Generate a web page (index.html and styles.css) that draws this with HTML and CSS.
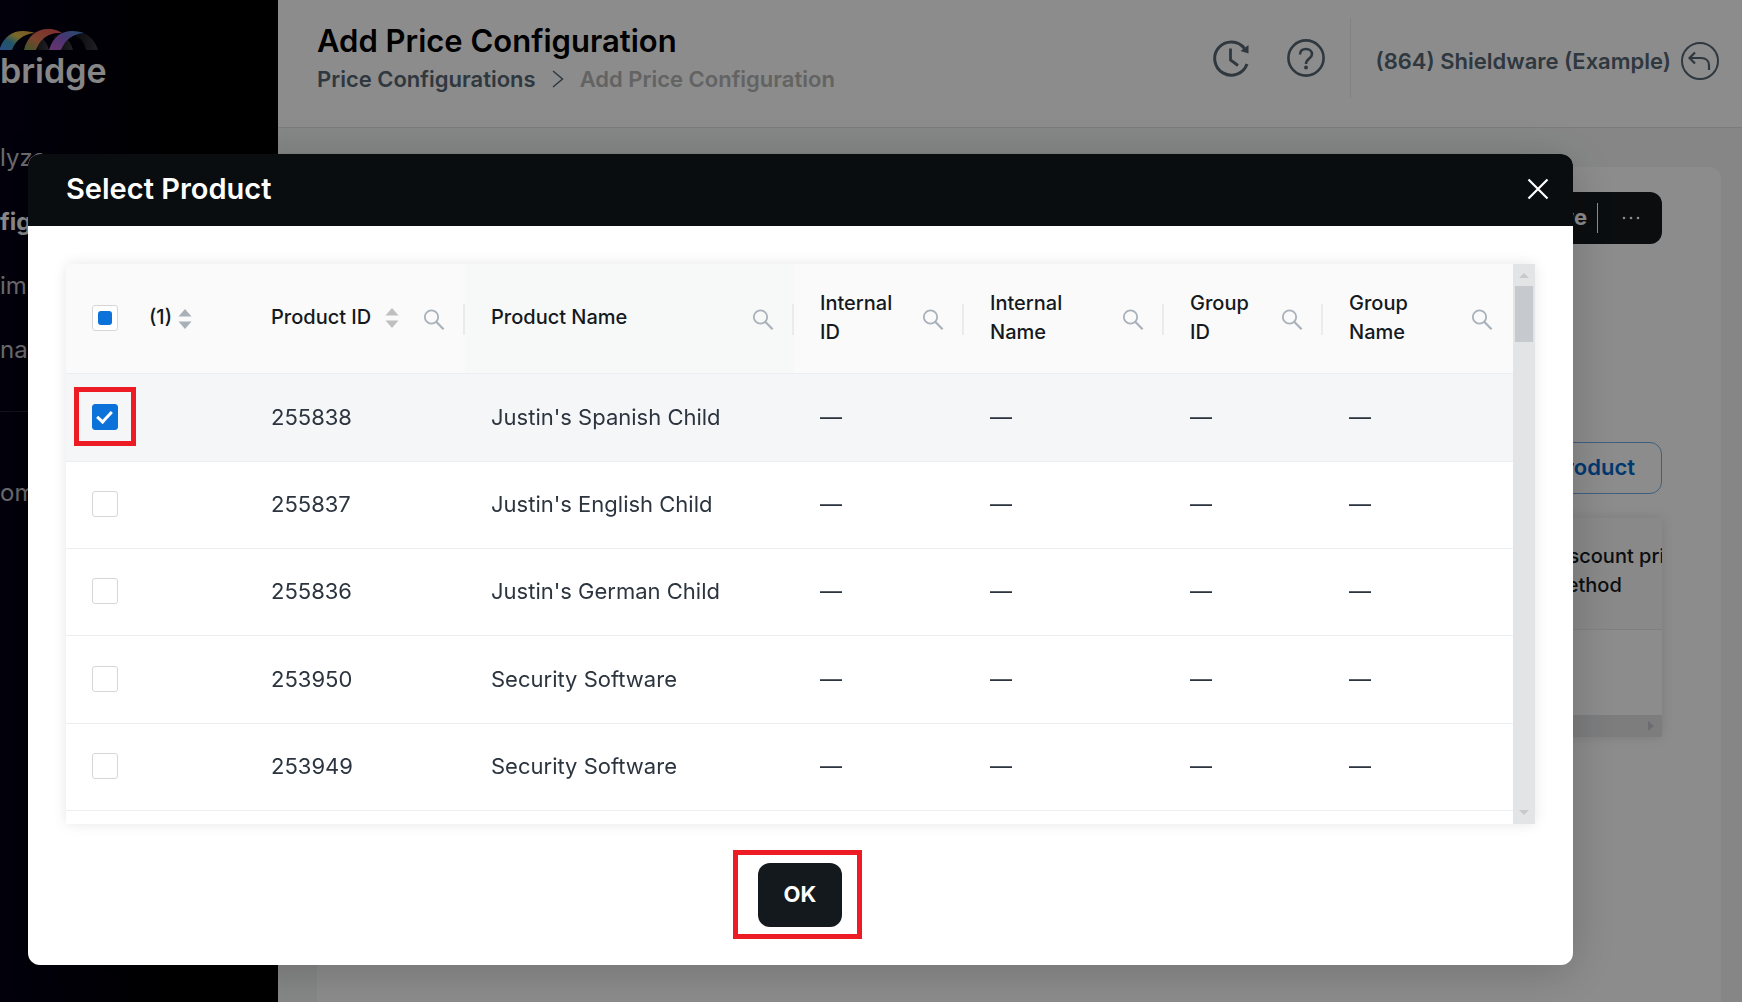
FILE: index.html
```html
<!DOCTYPE html>
<html lang="en">
<head>
<meta charset="utf-8">
<title>Add Price Configuration</title>
<link rel="stylesheet" href="styles.css">
</head>
<body>
<svg class="sprite" aria-hidden="true">
  <symbol id="search" viewBox="0 0 22 22"><circle cx="8.500" cy="8" r="6.700" fill="none" stroke="currentColor" stroke-width="1.800"/><path d="M13.200 12.800l7.400 7.400" fill="none" stroke="currentColor" stroke-width="2.200"/></symbol>
  <symbol id="sorter" viewBox="0 0 14 22"><path d="M7 1l6.500 7.500H.5zM7 21L.5 13.500h13z" fill="currentColor"/></symbol>
</svg>

<div class="app">
  <aside class="sidebar">
    <a class="brand" href="#" aria-label="bridge">
      <svg class="brand-mark" viewBox="0 0 100 22" aria-hidden="true">
        <defs>
          <linearGradient id="g1" x1="0" x2="1" y1="1" y2="0"><stop offset="0" stop-color="#4a8ff0"/><stop offset=".35" stop-color="#3f9ab8"/><stop offset=".6" stop-color="#d8c04a"/><stop offset="1" stop-color="#e89a40"/></linearGradient>
          <linearGradient id="g2" x1="0" x2="1" y1="1" y2="0"><stop offset="0" stop-color="#6fa050"/><stop offset=".4" stop-color="#e07a50"/><stop offset="1" stop-color="#e85058"/></linearGradient>
          <linearGradient id="g3" x1="0" x2="1" y1="1" y2="0"><stop offset="0" stop-color="#c060c8"/><stop offset=".5" stop-color="#8a60d0"/><stop offset="1" stop-color="#3a90d0"/></linearGradient>
          <linearGradient id="g4" x1="0" x2="1"><stop offset="0" stop-color="#0c0c12"/><stop offset="1" stop-color="#3c3c44"/></linearGradient>
        </defs>
        <path d="M34 5c8 2 13 8 15 16H38C36 14 33 10 28 8z" fill="url(#g4)"/>
        <path d="M58 5c8 2 13 8 15 16H62C60 14 57 10 52 8z" fill="url(#g4)"/>
        <path d="M72 2c14 0 23 8 26 19H86C84 12 79 7 70 4z" fill="url(#g4)"/>
        <path d="M0 19C4 8 12 2 23 2c5 0 9 1 12 2-12 1-19 7-23 17H0z" fill="url(#g1)"/>
        <path d="M24 21C27 8 36 0 48 0c7 0 11 2 14 4-14-1-22 6-26 17z" fill="url(#g2)"/>
        <path d="M49 21C53 8 61 2 72 2c5 0 9 1 12 2-12 1-19 7-23 17z" fill="url(#g3)"/>
      </svg>
      <span class="brand-name">bridge</span>
    </a>
    <nav class="nav">
      <a href="#">lyze</a>
      <a href="#" class="active">fig</a>
      <a href="#">im</a>
      <a href="#">nag</a>
      <hr>
      <a href="#">om</a>
    </nav>
  </aside>

  <div class="page">
    <header class="topbar">
      <div class="heading">
        <h1>Add Price Configuration</h1>
        <nav class="crumbs">
          <a href="#">Price Configurations</a>
          <svg width="12" height="18" viewBox="0 0 12 18" aria-hidden="true"><path d="M1 1l9.500 8L1 17" fill="none" stroke="currentColor" stroke-width="1.500"/></svg>
          <span>Add Price Configuration</span>
        </nav>
      </div>
      <div class="tools">
        <button class="icon-btn" aria-label="History">
          <svg viewBox="0 0 38 38"><path d="M32.500 9.500A16.600 16.600 0 1 0 35 25" fill="none" stroke="currentColor" stroke-width="3"/><path d="M36.500 6v8.500l-8-2.500z" fill="currentColor"/><path d="M18.500 9.500V21l7.500 5.500" fill="none" stroke="currentColor" stroke-width="2.800"/></svg>
        </button>
        <button class="icon-btn" aria-label="Help">
          <svg viewBox="0 0 38 38"><circle cx="19" cy="19" r="17.600" fill="none" stroke="currentColor" stroke-width="2.600"/><path d="M13 15.500C13 11.500 15.500 10 19 10s6 2 6 5.200c0 4.300-6 4.500-6 9.800" fill="none" stroke="currentColor" stroke-width="2.600"/><circle cx="19" cy="28.500" r="1.900" fill="currentColor"/></svg>
        </button>
        <div class="client">
          <span>(864) Shieldware (Example)</span>
          <button class="icon-btn" aria-label="Back">
            <svg viewBox="0 0 38 38"><circle cx="19" cy="19" r="18" fill="none" stroke="currentColor" stroke-width="2"/><path d="M14 10.500L8.500 16l5.500 5.500M8.500 16H20c5 0 8 3 8 7.500V28" fill="none" stroke="currentColor" stroke-width="2.200"/></svg>
          </button>
        </div>
      </div>
    </header>
    <main class="content">
      <section class="card">
        <div class="split-btn">
          <button class="save">Save</button>
          <button class="more" aria-label="More">
            <svg width="18" height="4" viewBox="0 0 18 4"><g fill="currentColor"><circle cx="2" cy="2" r="1.300"/><circle cx="9" cy="2" r="1.300"/><circle cx="16" cy="2" r="1.300"/></g></svg>
          </button>
        </div>
        <button class="add-product">Select Product</button>
        <div class="under-table">
          <div class="under-head"><span>Discount pricing<br>method</span></div>
          <div class="under-row"></div>
          <div class="h-scroll"><svg width="6" height="10" viewBox="0 0 6 10" aria-hidden="true"><path d="M0 0l6 5-6 5z" fill="currentColor"/></svg></div>
        </div>
      </section>
    </main>
  </div>
</div>

<div class="overlay">
  <div class="modal" role="dialog" aria-modal="true" aria-labelledby="modal-title">
    <header class="modal-head">
      <h2 id="modal-title">Select Product</h2>
      <button class="close" aria-label="Close"><svg width="22" height="22" viewBox="0 0 22 22"><path d="M1.500 1.500l19 19M20.500 1.500l-19 19" stroke="currentColor" stroke-width="2.200"/></svg></button>
    </header>
    <div class="modal-body">
      <div class="table-box">
        <div class="table-view">
          <table>
            <colgroup><col class="c-check"><col class="c-count"><col class="c-id"><col class="c-name"><col class="c-iid"><col class="c-iname"><col class="c-gid"><col class="c-gname"></colgroup>
            <thead>
              <tr>
                <th><input type="checkbox" class="partial" aria-label="Select all"></th>
                <th><div class="th count"><span>(1)</span><svg class="sorter cool"><use href="#sorter"/></svg></div></th>
                <th class="split"><div class="th"><span>Product ID</span><svg class="sorter"><use href="#sorter"/></svg><svg class="search"><use href="#search"/></svg></div></th>
                <th class="split hover"><div class="th"><span>Product Name</span><svg class="search"><use href="#search"/></svg></div></th>
                <th class="split"><div class="th"><span>Internal<br>ID</span><svg class="search"><use href="#search"/></svg></div></th>
                <th class="split"><div class="th"><span>Internal<br>Name</span><svg class="search"><use href="#search"/></svg></div></th>
                <th class="split"><div class="th"><span>Group<br>ID</span><svg class="search"><use href="#search"/></svg></div></th>
                <th><div class="th"><span>Group<br>Name</span><svg class="search"><use href="#search"/></svg></div></th>
              </tr>
            </thead>
            <tbody>
              <tr class="selected"><td><span class="marked"><input type="checkbox" checked aria-label="Select 255838"></span></td><td></td><td>255838</td><td>Justin's Spanish Child</td><td>—</td><td>—</td><td>—</td><td>—</td></tr>
              <tr><td><input type="checkbox" aria-label="Select 255837"></td><td></td><td>255837</td><td>Justin's English Child</td><td>—</td><td>—</td><td>—</td><td>—</td></tr>
              <tr><td><input type="checkbox" aria-label="Select 255836"></td><td></td><td>255836</td><td>Justin's German Child</td><td>—</td><td>—</td><td>—</td><td>—</td></tr>
              <tr><td><input type="checkbox" aria-label="Select 253950"></td><td></td><td>253950</td><td>Security Software</td><td>—</td><td>—</td><td>—</td><td>—</td></tr>
              <tr><td><input type="checkbox" aria-label="Select 253949"></td><td></td><td>253949</td><td>Security Software</td><td>—</td><td>—</td><td>—</td><td>—</td></tr>
            </tbody>
          </table>
        </div>
        <div class="v-scroll" aria-hidden="true">
          <svg width="10" height="5" viewBox="0 0 10 5"><path d="M5 0l5 5H0z" fill="currentColor"/></svg>
          <div class="thumb"></div>
          <svg width="10" height="5" viewBox="0 0 10 5"><path d="M0 0h10L5 5z" fill="currentColor"/></svg>
        </div>
      </div>
      <div class="actions"><span class="ok-mark"><button class="ok">OK</button></span></div>
    </div>
  </div>
</div>
</body>
</html>
```
FILE: styles.css
```css
*, *::before, *::after { box-sizing: border-box; }
body { margin: 0; font-family: Inter, "Liberation Sans", sans-serif; font-size: 22px; color: #2c353f; background: #f4f5f5; }
button { font: inherit; color: inherit; background: none; border: 0; padding: 0; cursor: pointer; }
a { color: inherit; text-decoration: none; }
h1, h2 { margin: 0; font-weight: 600; }
.sprite { position: absolute; width: 0; height: 0; }

/* Application shell */
.app { display: grid; grid-template-columns: 278px 1fr; height: 100vh; overflow: hidden; }
.sidebar { padding-top: 29px; background: linear-gradient(90deg, #030016, #000 70%); color: #c4c4c8; overflow: hidden; }
.brand { display: block; height: 104px; color: #f4f4f4; }
.brand-mark { display: block; width: 100px; height: 22px; }
.brand-name { display: block; font-size: 34px; font-weight: 600; line-height: 40px; }
.nav { display: flex; flex-direction: column; font-size: 24px; }
.nav a { height: 64px; line-height: 50px; }
.nav .active { font-weight: 700; color: #fff; }
.nav hr { width: 100%; margin: 22px 0 56px; border: 0; border-top: 1px solid #24222e; }

.page { display: flex; flex-direction: column; min-width: 0; }
.topbar { display: flex; justify-content: space-between; height: 128px; padding: 0 23px 0 39px; background: #fff; border-bottom: 1px solid #dfe1e4; }
.heading { padding-top: 22px; }
.heading h1 { font-size: 31px; line-height: 38px; color: #000; }
.crumbs { display: flex; align-items: center; gap: 16px; line-height: 38px; font-weight: 600; color: #576674; }
.crumbs span { color: #b4b4b4; }
.tools { display: flex; align-items: center; height: 116px; gap: 37px; color: #576674; }
.icon-btn { display: block; width: 38px; height: 38px; }
.icon-btn svg { display: block; width: 38px; height: 38px; }
.client { display: flex; align-items: center; gap: 10px; height: 80px; margin-left: -12px; padding: 5px 0 0 24px; border-left: 1px solid #e9ebed; font-weight: 600; }
.content { flex: 1; display: flex; padding: 39px 21px 0 39px; }
.card { flex: 1; display: flex; flex-direction: column; align-items: flex-end; min-width: 0; padding: 25px 59px; border-radius: 12px 12px 0 0; background: #fff; }
.split-btn { display: flex; align-items: center; height: 52px; border-radius: 12px; background: #14191d; color: #fff; font-weight: 700; }
.save { height: 52px; padding: 0 10px 2px 26px; }
.more { display: flex; align-items: center; height: 30px; padding: 0 22px 0 24px; border-left: 1px solid #fff; }
.add-product { height: 52px; margin-top: 198px; padding: 0 26px 2px; border: 1px solid #72aee8; border-radius: 12px; color: #0066cc; font-weight: 600; }
.under-table { width: 100%; margin-top: 24px; box-shadow: 0 0 12px rgba(0, 0, 0, .12); }
.under-head { display: flex; justify-content: flex-end; height: 112px; padding-top: 24px; overflow: hidden; border-bottom: 1px solid #e8eaec; background: #fafafa; color: #14191d; font-size: 20px; font-weight: 500; line-height: 29px; }
.under-head span { width: 113px; white-space: nowrap; }
.under-row { height: 85px; }
.h-scroll { display: flex; align-items: center; justify-content: flex-end; height: 22px; padding-right: 8px; background: #e3e4e6; color: #c4c7cc; }

/* Dialog */
.overlay { position: fixed; inset: 0; padding: 154px 169px 37px 28px; background: rgba(0, 0, 0, .45); }
.modal { border-radius: 12px; background: #fff; box-shadow: 0 6px 48px rgba(0, 0, 0, .2); }
.modal-head { display: flex; align-items: center; justify-content: space-between; height: 72px; padding: 0 24px 3px 38px; border-radius: 12px 12px 0 0; background: #090d0f; color: #fff; }
.modal-head h2 { font-size: 29px; line-height: 36px; }
.close, .close svg { display: block; }
.modal-body { padding: 38px; }
.table-box { display: flex; height: 560px; border-radius: 6px 0 0 0; box-shadow: 0 0 14px rgba(0, 0, 0, .1); }
.table-view { flex: 1; min-width: 0; overflow: hidden; border-radius: 6px 0 0 0; }
table { width: 100%; table-layout: fixed; border-collapse: separate; border-spacing: 0; }
.c-check { width: 57px; }
.c-count { width: 122px; }
.c-id { width: 220px; }
.c-name { width: 329px; }
.c-iid { width: 170px; }
.c-iname { width: 200px; }
.c-gid { width: 159px; }
.c-gname { width: 190px; }
th, td { padding: 0 0 0 26px; text-align: left; border-bottom: 1px solid #edeef0; white-space: nowrap; }
th { position: relative; height: 110px; padding-right: 20px; background: #fafafa; color: #14191d; font-size: 20px; font-weight: 500; line-height: 29px; }
th:first-child { padding-right: 0; padding-bottom: 2px; }
.hover { background: #f7f9f8; }
.split::after { content: ""; position: absolute; top: 40px; right: 0; width: 2px; height: 31px; background: #ebebec; }
.th { display: flex; align-items: center; gap: 14px; padding-bottom: 2px; }
.th span { margin-right: auto; }
.th.count { gap: 6px; }
.th.count span { margin-right: 0; }
.sorter { flex: none; width: 14px; height: 22px; margin-right: 10px; color: #bfbfbf; }
.sorter.cool { margin: 3px 0 0; color: #a9b0b8; }
.search { flex: none; width: 22px; height: 22px; margin-top: 4px; color: #a9b1bb; }
td { height: 87px; padding-bottom: 2px; }
tr:nth-child(3n+1) td { height: 88px; }
.selected td { background: #f5f6f8; }
input[type="checkbox"] { display: grid; place-items: center; appearance: none; width: 26px; height: 26px; margin: 0; border: 1px solid #d6d6d8; border-radius: 3px; background: #fff; }
input.partial::after { content: ""; width: 14px; height: 14px; border-radius: 3px; background: #0a72d8; }
input[type="checkbox"]:checked { border-color: #0a72d8; background: #0a72d8; }
input:checked::after { content: ""; width: 9px; height: 15px; margin-bottom: 3px; margin-right: 1px; border: solid #fff; border-width: 0 3px 3px 0; transform: rotate(43deg); }
.v-scroll { display: flex; flex-direction: column; align-items: center; width: 22px; padding: 9px 0; background: #e3e4e6; color: #c6c9ce; }
.v-scroll svg:last-child { margin-top: auto; }
.thumb { width: 18px; height: 56px; margin-top: 8px; background: #c6c9ce; }
.actions { display: flex; justify-content: center; margin-top: 39px; padding-right: 1px; }
.ok { display: block; width: 84px; height: 64px; padding-bottom: 2px; border-radius: 12px; background: #14191d; color: #fff; font-weight: 700; }

/* Call-out frames */
.marked, .ok-mark { position: relative; display: block; }
.marked::before, .ok-mark::before { content: ""; position: absolute; border: 5px solid #ed1c24; pointer-events: none; }
.marked::before { width: 62px; height: 59px; left: -18px; top: -17px; }
.ok-mark::before { width: 129px; height: 89px; left: -25px; top: -13px; }
```
